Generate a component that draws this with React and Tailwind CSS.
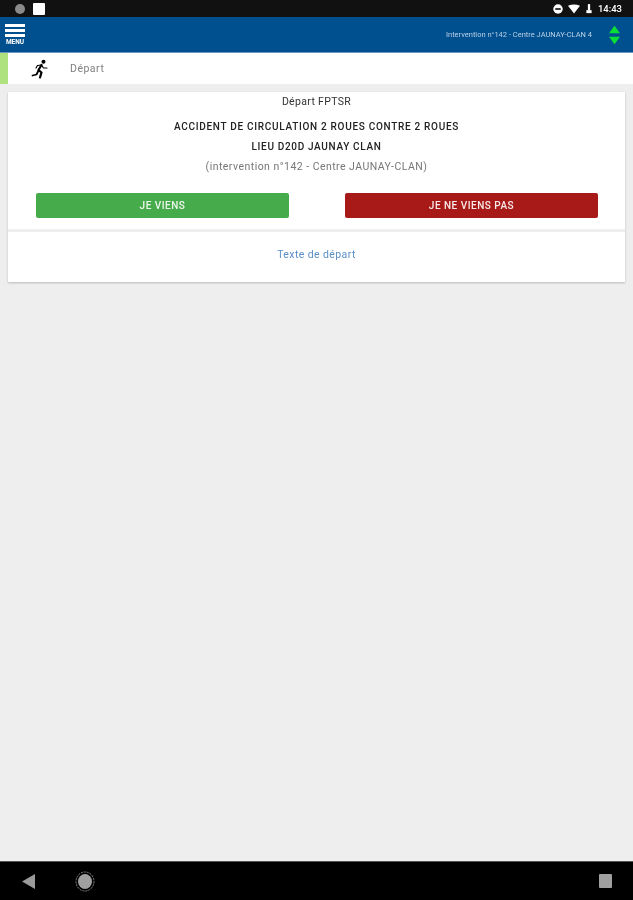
import React from 'react';

const font = { fontFamily: 'Roboto, sans-serif' };

const StatusBar = () => (
    <div className="flex h-[17px] shrink-0 items-center justify-between bg-[#111111] pl-[15px] pr-[11px]">
        <div className="flex items-center gap-[8px]">
            <div className="h-[10px] w-[10px] rounded-full bg-[#8a8a8a]" />
            <div className="h-[12px] w-[12px] rounded-[1px] bg-white" />
        </div>
        <div className="flex items-center">
            <svg width="10" height="10" viewBox="0 0 11 11">
                <circle cx="5.5" cy="5.5" r="5.2" fill="#fff" />
                <rect x="2.5" y="4.6" width="6" height="1.8" fill="#111" />
            </svg>
            <svg className="ml-[5px]" width="12" height="10" viewBox="0 0 13 10">
                <path d="M0 1.5 Q6.5 -1.5 13 1.5 L6.5 10 Z" fill="#fff" />
            </svg>
            <svg className="ml-[6px]" width="6" height="12" viewBox="0 0 8 13">
                <rect x="2.5" y="0" width="3" height="8" fill="#fff" />
                <rect x="0.5" y="8" width="7" height="4" fill="#fff" />
            </svg>
            <span className="ml-[6px] text-[9.5px] font-medium leading-none text-white">14:43</span>
        </div>
    </div>
);

const Header = () => (
    <div className="flex h-[36px] shrink-0 items-center justify-between border-b border-[#6f94c0] bg-[#00508f] pl-[5px] pr-[13px]">
        <div className="flex w-[20px] flex-col gap-[2px] pt-[1px]">
            <div className="h-[3px] bg-white" />
            <div className="h-[3px] bg-white" />
            <div className="h-[3px] bg-white" />
            <div className="text-center text-[6.5px] font-bold leading-[7px] text-white">MENU</div>
        </div>
        <div className="flex items-center gap-[17px]">
            <span className="whitespace-nowrap text-[7.5px] leading-none text-[#b9d0e6] blur-[0.7px]">
                Intervention n°142 - Centre JAUNAY-CLAN 4
            </span>
            <svg width="11" height="20" viewBox="0 0 12 20">
                <path d="M6 0 L12 8 H0 Z" fill="#08e035" />
                <path d="M0 12 H12 L6 20 Z" fill="#08e035" />
            </svg>
        </div>
    </div>
);

const RunnerIcon = () => (
    <svg width="18" height="20" viewBox="0 0 18 20" fill="none" stroke="#000" strokeLinecap="round" strokeLinejoin="round">
        <circle cx="12.5" cy="2.8" r="2" fill="#000" stroke="none" />
        <path d="M10.5 6 L7.5 11 L10.5 13.5 L9 18.5" strokeWidth="2.2" />
        <path d="M7.5 11.5 L5.5 15.5 L1.5 16.5" strokeWidth="1.8" />
        <path d="M10.5 6 L6.5 6.5 L5 9" strokeWidth="1.2" />
        <path d="M10.5 6 L12.5 9 L16 9" strokeWidth="1.2" />
    </svg>
);

const App = () => {
    return (
        <div className="flex h-[900px] w-full flex-col bg-[#eeeeee] blur-[0.5px]" style={font}>
            <StatusBar />
            <Header />

            <div className="flex h-[31px] shrink-0 items-center bg-white">
                <div className="h-full w-[8px] bg-[#aee27f]" />
                <div className="ml-[23px] flex w-[39px] justify-start">
                    <RunnerIcon />
                </div>
                <span className="text-[10.5px] tracking-[0.5px] text-[#808080]">Départ</span>
            </div>

            <div className="flex-1 px-[8px] pt-[8px]">
                <div className="bg-white shadow-[0_1px_2px_rgba(0,0,0,0.22)]">
                    <div className="flex flex-col items-center pt-[3px]">
                        <div className="text-[10.5px] leading-[13px] tracking-[0.33px] text-[#333333]">Départ FPTSR</div>
                        <div className="mt-[12px] text-[10px] font-medium leading-[13px] tracking-[0.7px] text-[#222222]">
                            ACCIDENT DE CIRCULATION 2 ROUES CONTRE 2 ROUES
                        </div>
                        <div className="mt-[7px] text-[10px] font-medium leading-[13px] tracking-[0.67px] text-[#222222]">
                            LIEU D20D JAUNAY CLAN
                        </div>
                        <div className="mt-[7px] text-[10.5px] leading-[13px] tracking-[0.46px] text-[#777777]">
                            (intervention n°142 - Centre JAUNAY-CLAN)
                        </div>
                    </div>
                    <div className="mt-[20px] flex justify-between pb-[11px] pl-[28px] pr-[27px]">
                        <button className="h-[25px] w-[253px] rounded-[2px] bg-[#45ab4b] text-[10px] font-medium tracking-[0.5px] text-[#eef7ee]">
                            JE VIENS
                        </button>
                        <button className="h-[25px] w-[253px] rounded-[2px] bg-[#a81a17] text-[10px] font-medium tracking-[0.5px] text-[#f8eaea]">
                            JE NE VIENS PAS
                        </button>
                    </div>
                    <div className="h-[3px] bg-[#eeeeee]" />
                    <div className="flex h-[50px] items-center justify-center pb-[4px] text-[10.5px] tracking-[0.4px] text-[#5b8fc7]">
                        Texte de départ
                    </div>
                </div>
            </div>

            <div className="flex h-[39px] shrink-0 items-center border-t border-[#555555] bg-black pl-[22px] pr-[21px]">
                <svg width="13" height="15" viewBox="0 0 13 15">
                    <path d="M13 0 V15 L0 7.5 Z" fill="#9a9a9a" />
                </svg>
                <svg className="ml-[40px]" width="20" height="21" viewBox="0 0 20 21">
                    <ellipse cx="10" cy="10.5" rx="9" ry="9.5" fill="none" stroke="#8a8a8a" strokeWidth="1" strokeDasharray="2 1" />
                    <ellipse cx="10" cy="10.5" rx="7" ry="7.5" fill="#a0a0a0" />
                </svg>
                <div className="ml-auto h-[14px] w-[13px] rounded-[1px] bg-[#a0a0a0]" />
            </div>
        </div>
    );
};

export default App;
